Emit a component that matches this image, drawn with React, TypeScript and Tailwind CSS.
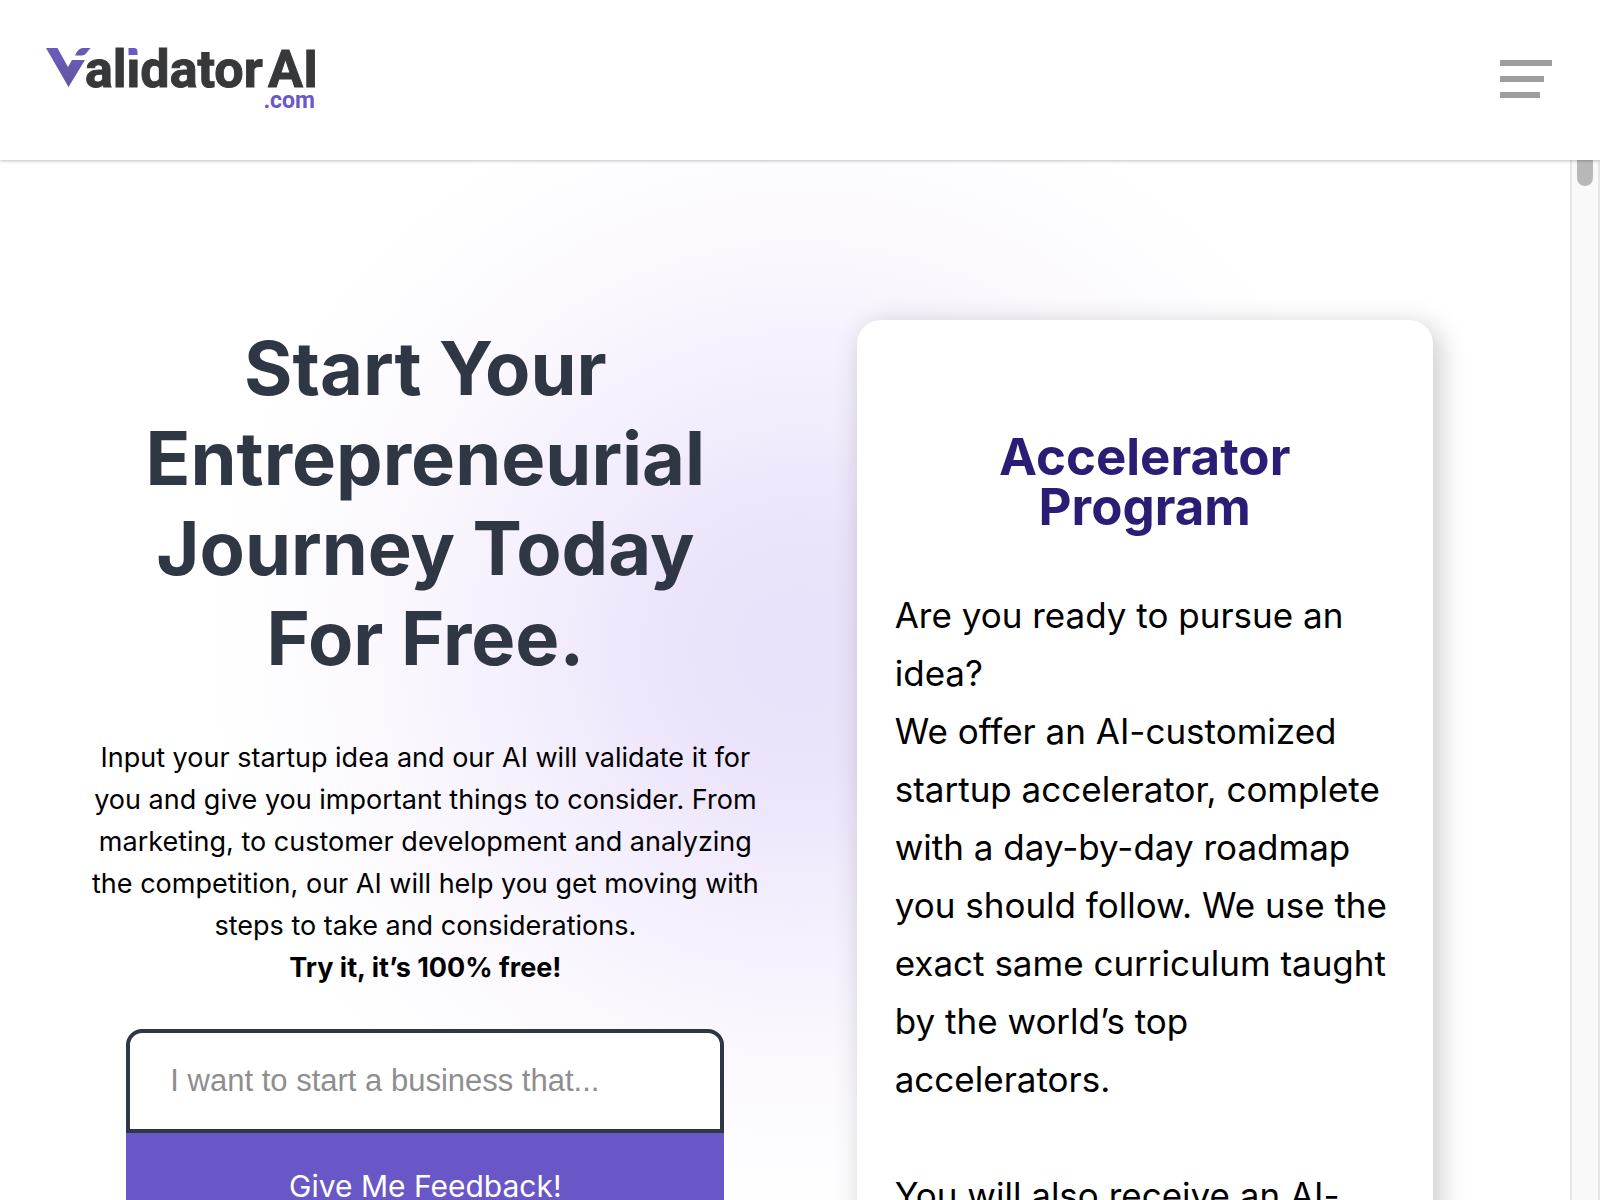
function Logo() {
  return (
    <svg viewBox="0 0 280 72" className="h-[72px] w-[280px] overflow-visible" role="img" aria-label="ValidatorAI.com">
      <defs>
        <linearGradient id="mark" x1="0" y1="0" x2="0" y2="1">
          <stop offset="0" stopColor="#6c5bbd" />
          <stop offset="1" stopColor="#62579f" />
        </linearGradient>
      </defs>
      <path d="M0 4H11.500L22 23L26 16Q27.500 16 30 16H39L22.500 43Z" fill="url(#mark)" />
      <path d="M29 11.500Q32 4 37 4H44.500L40 9.500Q38.500 11.500 36 11.500Z" fill="#6858b0" />
      <g
        fill="#37383a"
        stroke="#37383a"
        strokeWidth="1"
        fontFamily="Roboto, sans-serif"
        fontWeight="700"
        fontSize="52"
      >
        <text x="39" y="43">alidator</text>
        <text x="222" y="43">AI</text>
      </g>
      <path d="M81 1H93V14H81Z" fill="#ffffff" />
      <path d="M82.500 4H88Q91.500 4 91.500 8V11H82.500Z" fill="#6a58c8" />
      <text
        x="269"
        y="64"
        textAnchor="end"
        fontSize="23"
        fontFamily="Roboto, sans-serif"
        fontWeight="700"
        fill="#6a58c8"
      >
        .com
      </text>
    </svg>
  );
}

const headline = ["Start Your", "Entrepreneurial", "Journey Today", "For Free."];

const intro = [
  "Input your startup idea and our AI will validate it for",
  "you and give you important things to consider. From",
  "marketing, to customer development and analyzing",
  "the competition, our AI will help you get moving with",
  "steps to take and considerations.",
];

const program = [
  "Are you ready to pursue an",
  "idea?",
  "We offer an AI-customized",
  "startup accelerator, complete",
  "with a day-by-day roadmap",
  "you should follow. We use the",
  "exact same curriculum taught",
  "by the world’s top",
  "accelerators.",
];

function Lines({ lines }: { lines: string[] }) {
  return (
    <>
      {lines.map((line) => (
        <span key={line} className="block whitespace-nowrap">
          {line}{" "}
        </span>
      ))}
    </>
  );
}

export default function App() {
  return (
    <div className="flex h-screen flex-col overflow-hidden bg-white font-['Inter',sans-serif] text-black">
      <header className="z-10 flex h-40 shrink-0 items-start justify-between bg-white px-[46px] pt-11 shadow-[0_1px_3px_rgba(0,0,0,0.25)]">
        <a href="#home">
          <Logo />
        </a>
        <button type="button" aria-label="Open menu" className="mt-4 flex w-[54px] flex-col gap-2.5">
          <span className="h-1.5 w-[52px] bg-[#9e9e9e]" />
          <span className="h-1.5 w-11 bg-[#9e9e9e]" />
          <span className="h-1.5 w-10 bg-[#9e9e9e]" />
        </button>
      </header>

      <div className="flex min-h-0 flex-1">
        <main className="flex min-w-0 flex-1 items-start gap-2 overflow-hidden bg-[radial-gradient(ellipse_600px_580px_at_800px_490px,#eae1fa_0%,#ece4fb_22%,#f4effd_46%,#fbf9fe_72%,#ffffff_100%)] pt-40 pl-0.5">
          <section className="flex w-[54%] flex-col items-center pt-[3px] text-center">
            <h1 className="text-[74px] leading-[90px] font-bold text-[#2f3744]">
              <Lines lines={headline} />
            </h1>
            <p className="mt-[54px] text-[27px] leading-[42px]">
              <Lines lines={intro} />
              <strong className="block">Try it, it’s 100% free!</strong>
            </p>
            <form className="mt-10 flex w-[598px] flex-col" onSubmit={(e) => e.preventDefault()}>
              <input
                type="text"
                aria-label="Your business idea"
                placeholder="I want to start a business that..."
                className="h-[104px] rounded-t-2xl border-4 border-[#2f3744] bg-white px-10 font-['Liberation_Sans',sans-serif] text-[31px] outline-none placeholder:text-[#8e8e8e]"
              />
              <button type="submit" className="h-[106px] bg-[#6957c7] text-[30px] text-white">
                Give Me Feedback!
              </button>
            </form>
          </section>

          <section className="w-[576px] shrink-0 rounded-3xl bg-white px-[38px] pt-[112px] pb-20 shadow-[6px_6px_28px_rgba(0,0,0,0.22)]">
            <h2 className="text-center text-[51px] leading-[50px] font-bold text-[#2b1d75]">
              <Lines lines={["Accelerator", "Program"]} />
            </h2>
            <p className="mt-[54px] text-[35px] leading-[58px]">
              <Lines lines={program} />
            </p>
            <p className="mt-[58px] text-[35px] leading-[58px]">You will also receive an AI-customized roadmap.</p>
          </section>
        </main>

        <div
          aria-hidden="true"
          className="flex w-[30px] shrink-0 items-start justify-center border-x-2 border-[#e6e6e6] bg-[#f9f9f9]"
        >
          <div className="h-[26px] w-4 rounded-b-full bg-[#b8b8b8]" />
        </div>
      </div>
    </div>
  );
}
